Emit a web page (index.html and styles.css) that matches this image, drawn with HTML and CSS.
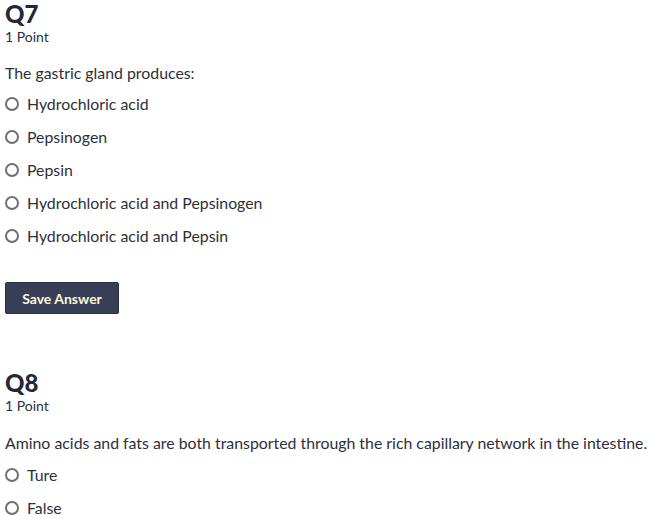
FILE: index.html
```html
<!DOCTYPE html>
<html>
<head>
<meta charset="utf-8">
<link rel="stylesheet" href="styles.css">
</head>
<body>
<div class="page">
  <section class="question">
    <h2 class="qnum">Q7</h2>
    <div class="points">1 Point</div>
    <p class="prompt">The gastric gland produces:</p>
    <ul class="options">
      <li class="option"><span class="radio"></span><span>Hydrochloric acid</span></li>
      <li class="option"><span class="radio"></span><span>Pepsinogen</span></li>
      <li class="option"><span class="radio"></span><span>Pepsin</span></li>
      <li class="option"><span class="radio"></span><span>Hydrochloric acid and Pepsinogen</span></li>
      <li class="option"><span class="radio"></span><span>Hydrochloric acid and Pepsin</span></li>
    </ul>
    <button class="save">Save Answer</button>
  </section>
  <section class="question q8">
    <h2 class="qnum">Q8</h2>
    <div class="points">1 Point</div>
    <p class="prompt">Amino acids and fats are both transported through the rich capillary network in the intestine.</p>
    <ul class="options">
      <li class="option"><span class="radio"></span><span>Ture</span></li>
      <li class="option"><span class="radio"></span><span>False</span></li>
    </ul>
  </section>
</div>
</body>
</html>
```
FILE: styles.css
```css
html, body {
  margin: 0;
  padding: 0;
  background: #ffffff;
}
body {
  font-family: Lato, "Liberation Sans", sans-serif;
  color: #2d2f3a;
}
.page {
  padding: 0 5px;
}
.question {
  display: flex;
  flex-direction: column;
  align-items: flex-start;
}
.qnum {
  margin: 0;
  padding-top: 1px;
  font-size: 24px;
  line-height: 26px;
  font-weight: 900;
  color: #22273a;
}
.points {
  font-size: 14px;
  line-height: 18px;
  margin-top: 1px;
  color: #2d2f3a;
}
.prompt {
  margin: 18px 0 0 0;
  font-size: 15.85px;
  line-height: 18px;
  white-space: nowrap;
}
.options {
  list-style: none;
  margin: 13px 0 0 0;
  padding: 0;
  display: flex;
  flex-direction: column;
  gap: 15px;
}
.option {
  display: flex;
  align-items: center;
  gap: 8px;
  font-size: 15.85px;
  line-height: 18px;
}
.radio {
  width: 10px;
  height: 10px;
  border: 2px solid #6f6f6f;
  border-radius: 50%;
  flex: none;
}
.save {
  margin-top: 37px;
  width: 114px;
  height: 32px;
  background: #373e56;
  border: 1px solid #2a2f42;
  border-radius: 2px;
  color: #fdf7dc;
  font-family: Lato, "Liberation Sans", sans-serif;
  font-size: 14px;
  font-weight: 700;
  padding: 0;
}
.q8 {
  margin-top: 55px;
}
.q8 .prompt {
  margin-top: 19px;
}
.q8 .options {
  margin-top: 14px;
}
```
